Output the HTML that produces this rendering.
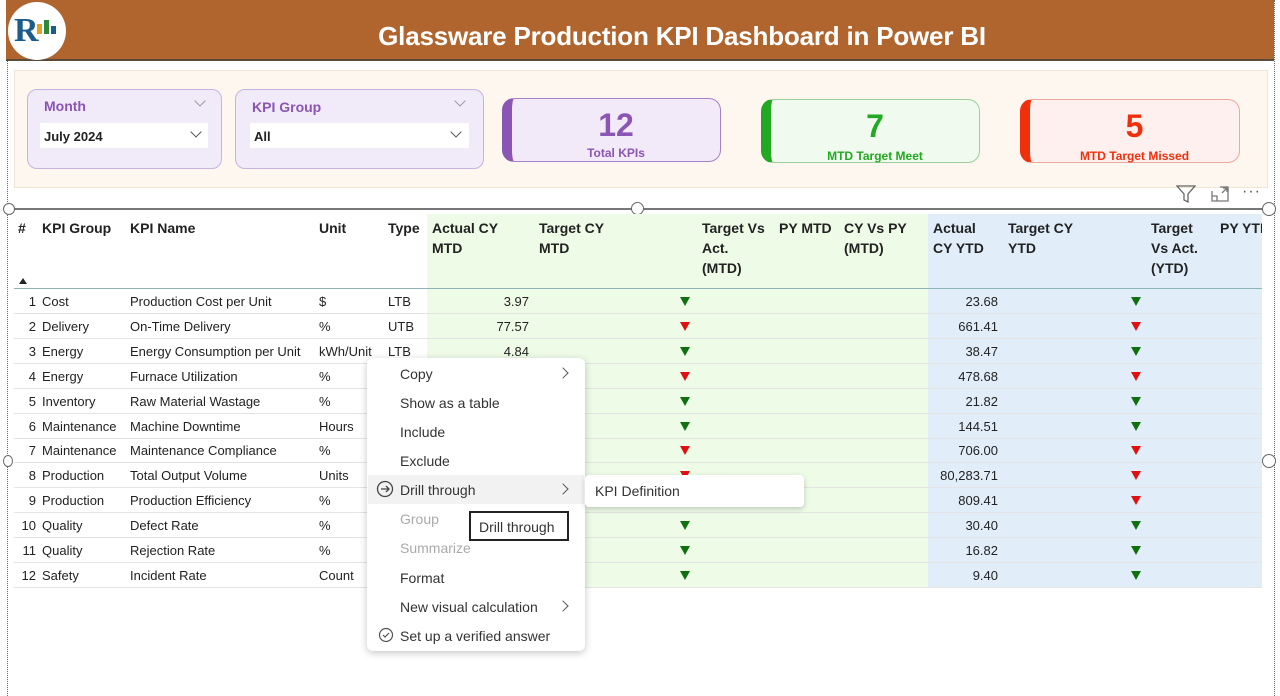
<!DOCTYPE html>
<html><head><meta charset="utf-8"><style>
*{margin:0;padding:0;box-sizing:border-box}
body{width:1280px;height:696px;overflow:hidden;background:#fff;font-family:"Liberation Sans",sans-serif;position:relative;color:#222}
.a{position:absolute;white-space:nowrap}
.hdr{left:6px;top:0;width:1268px;height:61px;background:#b0652f;border-bottom:2px solid #5a4a3a}
.title{left:82px;width:1200px;top:21px;text-align:center;color:#fff;font-weight:bold;font-size:26px;letter-spacing:-0.2px}
.sl{background:#f1eaf8;border:1px solid #c9b2e0;border-radius:10px}
.slt{color:#8a55b5;font-weight:bold;font-size:14px}
.sv{background:#fff;height:25px;font-weight:bold;font-size:13px;padding:6px 0 0 4px}
.card{border-radius:12px;text-align:center}
.num{font-weight:bold;font-size:32px;width:100%;top:8px}
.lab{font-weight:bold;font-size:12px;width:100%;top:49px}
.td{font-size:13px;color:#222}
.th{font-size:14px;font-weight:bold;color:#222;line-height:20px}
.tri{width:0;height:0;border-left:5px solid transparent;border-right:5px solid transparent;border-top:9px solid #107010}
.r{border-top-color:#e01010}
.line{height:1px;background:#e4e4e4;left:14px;width:1248px}
.mi{left:400px;font-size:14px;color:#333}
.cv{width:8px;height:8px;border-right:1.2px solid #555;border-bottom:1.2px solid #555;transform:rotate(45deg)}
.cr{width:8px;height:8px;border-right:1.3px solid #555;border-top:1.3px solid #555;transform:rotate(45deg);left:559px}
</style></head><body>
<div class="a" style="left:7px;top:0;width:1px;height:696px;border-left:1px dotted #666"></div>
<div class="a" style="left:1274px;top:0;width:1px;height:696px;border-left:1px dotted #666"></div>
<div class="a hdr"></div>
<div class="a title">Glassware Production KPI Dashboard in Power BI</div>
<div class="a" style="left:8px;top:2px;width:58px;height:58px;border-radius:50%;background:#fff"></div>
<div class="a" style="left:14px;top:12px;font-size:34px;font-weight:bold;color:#1c5c8c;font-family:'Liberation Serif',serif">R</div>
<div class="a" style="left:37px;top:24px;width:5px;height:10px;background:#e8a020"></div>
<div class="a" style="left:44px;top:20px;width:5px;height:14px;background:#2a8a3a"></div>
<div class="a" style="left:51px;top:26px;width:5px;height:8px;background:#1c5c8c"></div>
<div class="a" style="left:14px;top:70px;width:1254px;height:118px;background:#fdf7f0;border:1px solid #f3e5d5"></div>
<div class="a sl" style="left:27px;top:89px;width:195px;height:80px"></div>
<div class="a slt" style="left:44px;top:98px">Month</div>
<div class="a cv" style="left:196px;top:97px;border-color:#999"></div>
<div class="a sv" style="left:40px;top:123px;width:168px">July 2024</div>
<div class="a cv" style="left:192px;top:128px"></div>
<div class="a sl" style="left:235px;top:89px;width:249px;height:80px"></div>
<div class="a slt" style="left:252px;top:99px">KPI Group</div>
<div class="a cv" style="left:456px;top:97px;border-color:#999"></div>
<div class="a sv" style="left:250px;top:123px;width:219px">All</div>
<div class="a cv" style="left:452px;top:128px"></div>

<div class="a card" style="left:502px;top:98px;width:219px;height:64px;background:#f2eaf8;border:1px solid #a780c8;border-left:10px solid #8a55b5">
<div class="a num" style="color:#8a55b5">12</div><div class="a lab" style="color:#8a55b5;top:47px">Total KPIs</div></div>
<div class="a card" style="left:761px;top:99px;width:219px;height:64px;background:#f1faef;border:1px solid #9ccf9c;border-left:10px solid #22a822">
<div class="a num" style="color:#22a822">7</div><div class="a lab" style="color:#22a822">MTD Target Meet</div></div>
<div class="a card" style="left:1020px;top:99px;width:220px;height:64px;background:#fdf0ee;border:1px solid #efa89c;border-left:10px solid #f0300c">
<div class="a num" style="color:#f0300c">5</div><div class="a lab" style="color:#f0300c">MTD Target Missed</div></div>

<svg class="a" style="left:1176px;top:185px" width="20" height="18"><path d="M1 1 H19 L12 9 V17 L8 15 V9 Z" fill="none" stroke="#666" stroke-width="1.3"/></svg>
<svg class="a" style="left:1210px;top:185px" width="20" height="18"><path d="M2 6 V16 H18 V2 H10 M12 8 L17 3 M13 3 H17 V7 M2 11 H7 V16" fill="none" stroke="#777" stroke-width="1.3"/></svg>
<div class="a" style="left:1242px;top:183px;font-size:16px;color:#555;letter-spacing:1px">&middot;&middot;&middot;</div>

<div class="a" style="left:8px;top:208px;width:1262px;height:1.5px;background:#777"></div>
<div class="a" style="left:3px;top:203px;width:12px;height:12px;border-radius:50%;border:1px solid #666;background:#fff"></div>
<div class="a" style="left:631px;top:202px;width:13px;height:13px;border-radius:50%;border:1px solid #666;background:#fff"></div>
<div class="a" style="left:1262px;top:202px;width:14px;height:14px;border-radius:50%;border:1px solid #666;background:#fff"></div>
<div class="a" style="left:3px;top:455px;width:10px;height:12px;border-radius:50%;border:1px solid #666;background:#fff"></div>
<div class="a" style="left:1262px;top:454px;width:14px;height:14px;border-radius:50%;border:1px solid #666;background:#fff"></div>

<div class="a" style="left:427px;top:214px;width:501px;height:373px;background:#eefbe7"></div>
<div class="a" style="left:928px;top:214px;width:334px;height:373px;background:#e1eefa"></div>
<div class="a" style="left:14px;top:288px;width:1248px;height:1px;background:#8fb4b8"></div>

<div class="a th" style="left:18px;top:218px">#</div>
<div class="a" style="left:19px;top:278px;width:0;height:0;border-left:4px solid transparent;border-right:4px solid transparent;border-bottom:6px solid #222"></div>
<div class="a th" style="left:42px;top:218px">KPI Group</div>
<div class="a th" style="left:130px;top:218px">KPI Name</div>
<div class="a th" style="left:319px;top:218px">Unit</div>
<div class="a th" style="left:388px;top:218px">Type</div>
<div class="a th" style="left:432px;top:218px">Actual CY<br>MTD</div>
<div class="a th" style="left:539px;top:218px">Target CY<br>MTD</div>
<div class="a th" style="left:702px;top:218px">Target Vs<br>Act.<br>(MTD)</div>
<div class="a th" style="left:779px;top:218px">PY MTD</div>
<div class="a th" style="left:844px;top:218px">CY Vs PY<br>(MTD)</div>
<div class="a th" style="left:933px;top:218px">Actual<br>CY YTD</div>
<div class="a th" style="left:1008px;top:218px">Target CY<br>YTD</div>
<div class="a th" style="left:1151px;top:218px">Target<br>Vs Act.<br>(YTD)</div>
<div class="a th" style="left:1220px;top:218px;width:42px;overflow:hidden">PY YTD</div>

<div id="rows"></div>
<script>
var d=[["Cost","Production Cost per Unit","$","LTB","3.97","23.68"],
["Delivery","On-Time Delivery","%","UTB","77.57","661.41"],
["Energy","Energy Consumption per Unit","kWh/Unit","LTB","4.84","38.47"],
["Energy","Furnace Utilization","%","","","478.68"],
["Inventory","Raw Material Wastage","%","","","21.82"],
["Maintenance","Machine Downtime","Hours","","","144.51"],
["Maintenance","Maintenance Compliance","%","","","706.00"],
["Production","Total Output Volume","Units","","","80,283.71"],
["Production","Production Efficiency","%","","","809.41"],
["Quality","Defect Rate","%","","","30.40"],
["Quality","Rejection Rate","%","","","16.82"],
["Safety","Incident Rate","Count","","","9.40"]];
var m="GRGRGGRR-GGG",y="GRGRGGRRRGGG",h="";
for(var i=0;i<12;i++){var t=289+i*24.9,r=d[i],c=t+5;
h+='<div class="a line" style="top:'+(t+24)+'px"></div>';
h+='<div class="a td" style="left:14px;width:22px;text-align:right;top:'+c+'px">'+(i+1)+'</div>';
h+='<div class="a td" style="left:42px;top:'+c+'px">'+r[0]+'</div>';
h+='<div class="a td" style="left:130px;top:'+c+'px">'+r[1]+'</div>';
h+='<div class="a td" style="left:319px;top:'+c+'px">'+r[2]+'</div>';
h+='<div class="a td" style="left:388px;top:'+c+'px">'+r[3]+'</div>';
h+='<div class="a td" style="left:430px;width:99px;text-align:right;top:'+c+'px">'+r[4]+'</div>';
h+='<div class="a td" style="left:900px;width:98px;text-align:right;top:'+c+'px">'+r[5]+'</div>';
if(m[i]!='-')h+='<div class="a tri'+(m[i]=='R'?' r':'')+'" style="left:680px;top:'+(t+8)+'px"></div>';
h+='<div class="a tri'+(y[i]=='R'?' r':'')+'" style="left:1131px;top:'+(t+8)+'px"></div>';}
document.getElementById('rows').innerHTML=h;
</script>

<div class="a" style="left:367px;top:358px;width:218px;height:293px;background:#fff;border-radius:6px;box-shadow:0 2px 8px rgba(0,0,0,.22)"></div>
<div class="a" style="left:368px;top:475px;width:216px;height:29px;background:#f2f2f2"></div>
<div class="a mi" style="top:366px">Copy</div><div class="a cr" style="top:369px"></div>
<div class="a mi" style="top:395px">Show as a table</div>
<div class="a mi" style="top:424px">Include</div>
<div class="a mi" style="top:453px">Exclude</div>
<svg class="a" style="left:376px;top:480px" width="18" height="18"><circle cx="9" cy="9" r="7.5" fill="none" stroke="#444" stroke-width="1.3"/><path d="M5 9 H13 M10 6 L13 9 L10 12" fill="none" stroke="#444" stroke-width="1.3"/></svg>
<div class="a mi" style="top:482px">Drill through</div><div class="a cr" style="top:485px"></div>
<div class="a mi" style="top:511px;color:#aaa">Group</div>
<div class="a mi" style="top:540px;color:#aaa">Summarize</div>
<div class="a mi" style="top:570px">Format</div>
<div class="a mi" style="top:599px">New visual calculation</div><div class="a cr" style="top:602px"></div>
<svg class="a" style="left:378px;top:627px" width="16" height="16"><circle cx="8" cy="8" r="6.5" fill="none" stroke="#555" stroke-width="1.2"/><path d="M5 8 L7 10 L11 6" fill="none" stroke="#555" stroke-width="1.2"/></svg>
<div class="a mi" style="top:628px">Set up a verified answer</div>
<div class="a" style="left:469px;top:511px;width:100px;height:30px;background:#fff;border:2px solid #222;font-size:14px;padding:6px 0 0 8px;color:#333">Drill through</div>
<div class="a" style="left:585px;top:475px;width:219px;height:32px;background:#fff;border-radius:4px;box-shadow:0 2px 6px rgba(0,0,0,.2);font-size:14px;padding:8px 0 0 10px;color:#333">KPI Definition</div>
</body></html>
